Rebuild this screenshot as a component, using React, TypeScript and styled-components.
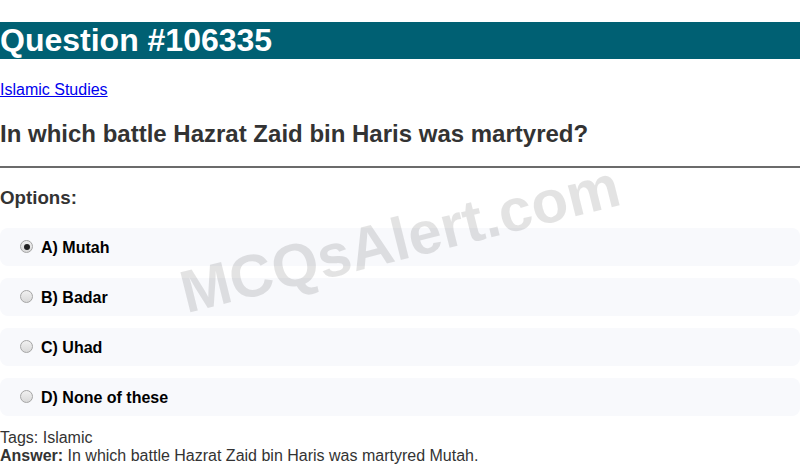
import React from 'react';
import styled, { createGlobalStyle } from 'styled-components';

const GlobalStyle = createGlobalStyle`
  html, body {
    margin: 0;
    padding: 0;
    background: #fff;
  }
  body {
    font-family: 'Liberation Sans', Arial, sans-serif;
    font-size: 16px;
    color: #333;
  }
`;

const Page = styled.div`
  position: relative;
  overflow: hidden;
  display: flow-root;
`;

const Header = styled.h1`
  margin: 22px 0 22.5px;
  font-size: 32px;
  font-weight: bold;
  line-height: 36.8px;
  color: #fff;
  background-color: #006073;
`;

const CategoryLink = styled.a`
  display: block;
  color: #0000ee;
  text-decoration: underline;
  line-height: 18.4px;
`;

const QuestionTitle = styled.h2`
  margin: 20.5px 0 18.5px;
  font-size: 24px;
  line-height: 27.6px;
  color: #333;
`;

const Divider = styled.hr`
  margin: 8px 0;
  border: none;
  border-top: 2px solid #6b6b6b;
  height: 0;
`;

const SectionTitle = styled.h3`
  margin: 18.72px 0 19px;
  font-size: 18.72px;
  line-height: 21.5px;
  color: #333;
`;

const OptionList = styled.div`
  display: flex;
  flex-direction: column;
  gap: 12px;
  margin-bottom: 13px;
`;

const OptionRow = styled.label`
  display: flex;
  align-items: center;
  height: 38px;
  padding: 2px 0 0 20px;
  box-sizing: border-box;
  background-color: #f8f9fc;
  border-radius: 8px;
  font-weight: bold;
  color: #000;
`;

const Radio = styled.span<{ $checked?: boolean }>`
  position: relative;
  width: 13px;
  height: 13px;
  margin: -2px 8px 0 0;
  box-sizing: border-box;
  border-radius: 50%;
  border: 1px solid #a5a5a5;
  background: linear-gradient(#f0f0f0, #d9d9d9);
  &::after {
    content: '';
    display: ${({ $checked }) => ($checked ? 'block' : 'none')};
    position: absolute;
    left: 2.5px;
    top: 2.5px;
    width: 6px;
    height: 6px;
    border-radius: 50%;
    background: #222;
  }
`;

const Meta = styled.div`
  line-height: 18.4px;
  color: #333;
`;

const Strong = styled.strong`
  font-weight: bold;
`;

const Watermark = styled.div`
  position: absolute;
  left: 400px;
  top: 239px;
  transform: translate(-50%, -50%) rotate(-14deg);
  font-size: 60px;
  font-weight: bold;
  white-space: nowrap;
  color: rgba(0, 0, 0, 0.11);
  pointer-events: none;
`;

const options = [
  { key: 'A', text: 'Mutah', checked: true },
  { key: 'B', text: 'Badar' },
  { key: 'C', text: 'Uhad' },
  { key: 'D', text: 'None of these' },
];

export default function App() {
  return (
    <Page>
      <GlobalStyle />
      <Header>Question #106335</Header>
      <CategoryLink href="#">Islamic Studies</CategoryLink>
      <QuestionTitle>In which battle Hazrat Zaid bin Haris was martyred?</QuestionTitle>
      <Divider />
      <SectionTitle>Options:</SectionTitle>
      <OptionList>
        {options.map((o) => (
          <OptionRow key={o.key}>
            <Radio $checked={o.checked} />
            {o.key}) {o.text}
          </OptionRow>
        ))}
      </OptionList>
      <Meta>Tags: Islamic</Meta>
      <Meta>
        <Strong>Answer:</Strong> In which battle Hazrat Zaid bin Haris was martyred Mutah.
      </Meta>
      <Watermark>MCQsAlert.com</Watermark>
    </Page>
  );
}
